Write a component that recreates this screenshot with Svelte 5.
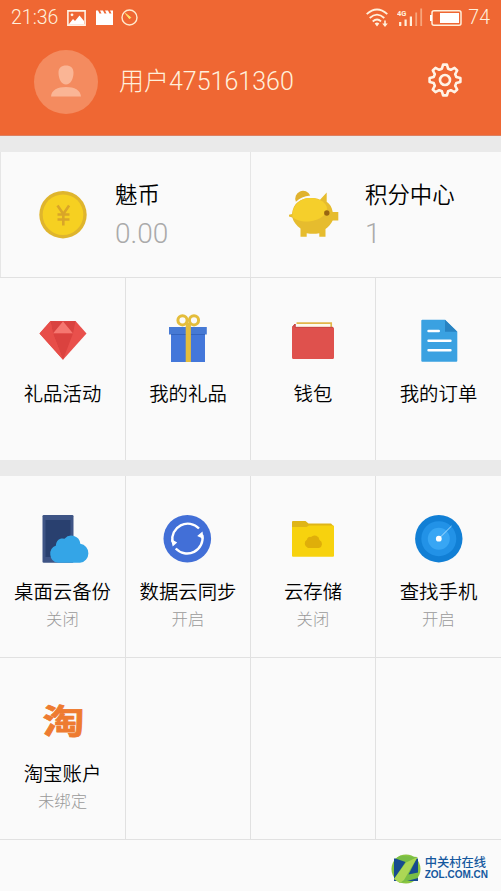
<script>
  const balances = [
    { icon: "coin", title: "魅币", value: "0.00" },
    { icon: "piggy", title: "积分中心", value: "1" },
  ];

  const gifts = [
    { icon: "gem", label: "礼品活动" },
    { icon: "gift", label: "我的礼品" },
    { icon: "wallet", label: "钱包" },
    { icon: "order", label: "我的订单" },
  ];

  const services = [
    { icon: "backup", label: "桌面云备份", state: "关闭" },
    { icon: "sync", label: "数据云同步", state: "开启" },
    { icon: "folder", label: "云存储", state: "关闭" },
    { icon: "radar", label: "查找手机", state: "开启" },
    { icon: "taobao", label: "淘宝账户", state: "未绑定" },
    {},
    {},
    {},
  ];
</script>

{#snippet icon(name)}
  <svg class="icon" viewBox="0 0 50 50">
    {#if name === "coin"}
      <circle cx="25" cy="24.7" r="23.7" fill="#dfb52d" />
      <circle cx="25" cy="24.7" r="20.3" fill="#f6d021" />
      <path d="M19.500 15.500l5.800 8.500 5.800-8.500M19.500 24.500h12M19.500 29.500h12M25.300 24v11.500" fill="none" stroke="#d9a528" stroke-width="2.600" />
    {:else if name === "piggy"}
      <path d="M7.900 11.700a7.700 7.700 0 0 1 14.300-6.200C16 6 12 8 7.900 11.700z" fill="#e0b22e" />
      <path d="M4 24C5 13 13 8 22 8c4 0 7 .3 10 1.700l6.700-7.200v9.300c3.500 2.500 5.200 5.700 6 10.200h5.600v8.500h-5.600c-1.700 3.500-4 6.200-7.200 8.500v7.700h-6.200v-3.500c-4 .7-8.500 .7-12.600 0v3.500h-6.200v-8.200C8.500 35.500 5.500 32 4.300 27.500L1 26.500v-1.800z" fill="#e6bc2e" />
      <path d="M4.500 27C3.500 16 12 8 22 8c10 0 17 5 17 11 0 7-11 12.500-20 12.500-7 0-12-1.800-14.500-4.500z" fill="#f5cf2b" />
      <circle cx="38.800" cy="23" r="2.700" fill="#986512" />
    {:else if name === "gem"}
      <path d="M12.500 5h25l11 12.500L25 43.800 1.500 17.500z" fill="#e9504c" />
      <path d="M12.500 5L25 5.500 15 17.500zM37.500 5L25 5.500l10 12z" fill="#d94340" />
      <path d="M25 5.500l10 12H15z" fill="#f57770" />
      <path d="M15 17.500h20L25 43.800z" fill="#db423f" />
      <path d="M1.500 17.500L12.500 5 15 17.500 25 43.800z" fill="#e74e49" />
    {:else if name === "gift"}
      <path d="M8 17h34v29H8z" fill="#4377da" />
      <path d="M6 11h37.800v7.500H6z" fill="#4679d4" />
      <path d="M8 18.500h34" stroke="#305fb8" stroke-width=".8" />
      <circle cx="19.500" cy="4.300" r="4.600" class="ribbon" />
      <circle cx="31" cy="4.300" r="4.600" class="ribbon" />
      <path d="M22.700 7h5.200v39h-5.200z" fill="#e4bd3b" />
    {:else if name === "wallet"}
      <path d="M8.500 7.200h34.700V13" fill="none" stroke="#e2b64a" stroke-width="1.700" />
      <path d="M10 8.500h31.500V12H10z" fill="#fffbea" />
      <path d="M4 11l2.500-3h1.200v3H44.500q1.500 0 1.500 1.500v29q0 1.500-1.500 1.500h-39Q4 43 4 41.500z" fill="#df514d" />
      <path d="M4.500 11L7 8v3.300h38" fill="none" stroke="#bd4442" stroke-width=".8" />
    {:else if name === "order"}
      <path d="M8.300 3.700H31l12.300 12v29q0 1-1 1h-34q-1 0-1-1v-40q0-1 1-1z" fill="#3aa1e1" />
      <path d="M31 3.700l12.300 12H31z" fill="#2883c2" />
      <path d="M14.500 15h10.300M14.500 24.700h22M14.500 34.300h22" stroke="#fff" stroke-width="2.400" stroke-linecap="round" />
    {:else if name === "backup"}
      <rect x="4.500" y="1" width="31" height="47.800" rx="1.200" fill="#3e5485" />
      <path d="M7.500 6h25v37h-25z" fill="#29406f" />
      <path d="M20 48.800a9 9 0 0 1-2-17.300 6.500 6.500 0 0 1 8.500-6.700 9 9 0 0 1 15.800 5A9.600 9.600 0 0 1 42 48.800z" fill="#34a5e7" />
    {:else if name === "sync"}
      <circle cx="24.300" cy="24.700" r="23.800" fill="#426fd7" />
      <path d="M36 14.500A15.500 15.500 0 0 0 9.500 28M12.700 34.500A15.500 15.500 0 0 0 39.300 21" fill="none" stroke="#fff" stroke-width="2.400" />
      <path d="M8 25l1.700 7.500 4.500-4zM40.600 25L39.500 17.500l-5.300 4.500z" fill="#fff" />
    {:else if name === "folder"}
      <path d="M4 8q0-1 1-1h12.500l3 2.500h22.500l3 3V20H4z" fill="#dfb517" />
      <path d="M4 13h14.500l2.500-1.600H45q1 0 1 1v29.300q0 1-1 1H5q-1 0-1-1z" fill="#f7d20e" />
      <path d="M20 34a4.700 4.700 0 0 1-1-8.500 3 3 0 0 1 4-2.500 5 5 0 0 1 8.500 3A4.300 4.300 0 0 1 31 34z" fill="#dfae0a" />
    {:else if name === "radar"}
      <circle cx="24.800" cy="24.700" r="23.700" fill="#117fd5" />
      <circle cx="24.800" cy="24.700" r="17.500" fill="#2292e7" />
      <circle cx="24.800" cy="24.700" r="11" fill="#38a6f4" />
      <path d="M24.800 24.700L37.500 12" stroke="#a7dcff" />
      <circle cx="24.800" cy="24.700" r="2.900" fill="#fff" />
    {:else if name === "taobao"}
      <text class="tao" transform="translate(25.500 38) scale(1 .82)">淘</text>
    {/if}
  </svg>
{/snippet}

{#snippet cell(item)}
  <div class="cell">
    {#if item.icon}
      {@render icon(item.icon)}
      <div class="label">{item.label}</div>
      {#if item.state}
        <div class="state">{item.state}</div>
      {/if}
    {/if}
  </div>
{/snippet}

<main>
  <header>
    <div class="status">
      <span class="time">21:36</span>
      <svg class="picture" width="19" height="16" viewBox="0 0 19 16">
        <path d="M.9.900h17.200v14.200H.9z" fill="none" stroke="#fff3e6" stroke-width="1.600" />
        <circle cx="5" cy="4.800" r="1.400" fill="#fff3e6" />
        <path d="M2 14l4-5 2 2 4.500-5.500L17 11v3.500H2z" fill="#fff" />
      </svg>
      <svg class="clip" width="17" height="16" viewBox="0 0 17 16">
        <path d="M0 .5h2l1.500 3h2L4 .5h3l1.500 3h2L9 .5h3l1.500 3h2L14 .5h3V15H0z" fill="#fff" />
      </svg>
      <svg class="gauge" width="17" height="17" viewBox="0 0 17 17">
        <circle cx="8.500" cy="8.500" r="7.500" fill="none" stroke="#ffe9cd" stroke-width="1.400" />
        <path d="M4.500 4.500l5.300 4-1.300 1.300z" fill="#ffe36b" stroke="#ffe36b" />
      </svg>
      <svg class="wifi" width="22" height="20" viewBox="0 0 22 20">
        <path d="M.7 6.200Q11-3.200 21.300 6.200M3.700 10Q11 3.300 18.300 10M6.700 13.500Q11 9.600 15 13.300" fill="none" stroke="#fff0dc" stroke-width="1.800" />
        <path d="M8.700 15.500q2.300-1.800 4.600 0L11 18.500zM18.200 12.500h1.600v3h2l-2.800 3.500-2.800-3.500h2z" fill="#fff0dc" />
      </svg>
      <svg class="signal" width="26" height="19" viewBox="0 0 26 19">
        <text x="0" y="7.500" class="network">4G</text>
        <path d="M3.200 18v-4M8.600 18v-6.500M13.900 18v-9.500" stroke="#fff0dc" stroke-width="2.200" />
        <path d="M19.200 18V4.500M24.200 18V.5" stroke="#f7a57b" stroke-width="1.800" />
      </svg>
      <svg class="battery" width="32" height="16" viewBox="0 0 32 16">
        <rect x="2" y=".8" width="29" height="14.400" rx="2" fill="none" stroke="#fff0dc" stroke-width="1.500" />
        <path d="M0 5h2v6H0zM10 3h19v10H10z" fill="#fff" />
      </svg>
      <span>74</span>
    </div>
    <div class="profile">
      <svg class="avatar" width="64" height="64" viewBox="0 0 64 64">
        <circle cx="32" cy="32" r="32" fill="#f48b5f" />
        <path d="M24.500 22.500c0-4.500 3-7 7.500-7s7.500 2.500 7.500 7c0 6.500-3 12-7.500 12s-7.500-5.500-7.500-12zM17 46.500c.5-6.500 6.500-9.500 15-9.500s14.500 3 15 9.500z" fill="#fab595" />
      </svg>
      <span class="name">用户475161360</span>
      <svg class="gear" width="34" height="34" viewBox="-17 -17 34 34">
        <path d="M-3.100-11.300L-1.900-15.400H1.900L3.100-11.300 5.800-10.200 9.500-12.200 12.200-9.500 10.200-5.800 11.300-3.100 15.400-1.900V1.900L11.300 3.100 10.200 5.800 12.200 9.500 9.500 12.200 5.800 10.200 3.100 11.300 1.900 15.400H-1.900L-3.100 11.300-5.800 10.200-9.500 12.200-12.200 9.500-10.200 5.800-11.300 3.100-15.400 1.900V-1.900L-11.300-3.100-10.200-5.800-12.200-9.500-9.500-12.200-5.800-10.200z" />
        <circle r="5" />
      </svg>
    </div>
  </header>

  <section class="balances">
    {#each balances as item}
      <div class="balance">
        {@render icon(item.icon)}
        <div>
          <div class="title">{item.title}</div>
          <div class="value">{item.value}</div>
        </div>
      </div>
    {/each}
  </section>

  <section class="grid gifts">
    {#each gifts as item}
      {@render cell(item)}
    {/each}
  </section>

  <section class="grid services">
    {#each services as item}
      {@render cell(item)}
    {/each}
  </section>

  <footer>
    <svg width="30" height="30" viewBox="0 0 30 30">
      <circle cx="15" cy="15" r="14.500" fill="#8bc63f" />
      <path d="M3 4.500h24v22.500H3z" fill="#174b8f" />
      <path d="M4.500 4.500L9 1.800 26.500 3 17.500 20.500 27 18.500V24L9 29 3 25l11.500-17z" fill="#79bd45" />
      <path d="M15 8.500L26.500 3 13 26 9 29 3 25z" fill="#acd755" />
    </svg>
    <div class="zol">
      <div class="zol-name">中关村在线</div>
      <div class="zol-url">ZOL.COM.CN</div>
    </div>
  </footer>
</main>

<style>
  :global(body) {
    background: #fafafa;
  }

  main {
    width: 501px;
    height: 891px;
    overflow: hidden;
    background: #fafafa;
    font-family: Roboto, "Noto Sans CJK SC", sans-serif;
    font-weight: 300;
    color: #000;
  }

  svg {
    display: block;
    flex: none;
  }

  header {
    box-sizing: border-box;
    height: 136px;
    background: #ef6733;
    border-bottom: 1px solid #dc8061;
    color: #fff0dc;
  }

  .status {
    display: flex;
    align-items: center;
    height: 35px;
    padding: 0 11px;
    font-size: 19.5px;
  }

  .time {
    width: 47px;
  }

  .picture {
    margin-left: 9px;
  }

  .clip {
    margin-left: 10px;
  }

  .gauge {
    margin-left: 8px;
  }

  .wifi {
    margin-left: auto;
  }

  .signal {
    margin-left: 9px;
  }

  .network {
    font: 700 7.5px Roboto, sans-serif;
    fill: #fff0dc;
  }

  .battery {
    margin: 0 6px 0 7px;
  }

  .profile {
    display: flex;
    align-items: center;
    height: 64px;
    padding: 15px 39px 0 34px;
  }

  .name {
    margin-left: 21px;
    font-size: 25px;
    line-height: 32px;
  }

  .gear {
    margin: 0 0 5px auto;
    fill: none;
    stroke: #fff3e6;
    stroke-width: 2.6;
    stroke-linejoin: round;
  }

  .balances {
    display: grid;
    grid-template-columns: 251px 250px;
    height: 125px;
    border-top: 16px solid #eaeaea;
    border-bottom: 1px solid #e1e1e1;
  }

  .balance {
    display: flex;
    padding: 25px 0 0 37px;
  }

  .balance:first-child {
    border-left: 1px solid #e6e6e6;
    border-right: 1px solid #e6e6e6;
  }

  .balance .icon {
    margin: 13px 27px 0 0;
  }

  .title {
    font-size: 22.4px;
    line-height: 36px;
    font-weight: 350;
  }

  .value {
    margin-top: 3px;
    font-size: 28px;
    line-height: 36px;
    color: #aaa;
  }

  .icon {
    width: 50px;
    height: 50px;
    overflow: visible;
  }

  .ribbon {
    fill: none;
    stroke: #e4bd3b;
    stroke-width: 3;
  }

  .tao {
    font: 700 42px "Noto Sans CJK SC", sans-serif;
    text-anchor: middle;
    fill: #ee7b30;
    stroke: #ee7b30;
    stroke-width: 0.9;
    stroke-linejoin: round;
  }

  .grid {
    display: grid;
    grid-template-columns: 126px 125px 125px 125px;
  }

  .gifts {
    height: 182px;
    border-bottom: 16px solid #eaeaea;
  }

  .cell {
    display: flex;
    flex-direction: column;
    align-items: center;
    box-sizing: border-box;
    padding-top: 38px;
    border-right: 1px solid #e1e1e1;
  }

  .cell:nth-child(4n) {
    border-right: 0;
  }

  .services {
    grid-auto-rows: 182px;
  }

  .services .cell {
    border-bottom: 1px solid #e1e1e1;
  }

  .label {
    margin-top: 15px;
    font-size: 19.4px;
    line-height: 28px;
    font-weight: 350;
    white-space: nowrap;
  }

  .state {
    margin-top: 1px;
    font-size: 16.4px;
    line-height: 24px;
    color: #999;
  }

  footer {
    display: flex;
    justify-content: flex-end;
    align-items: center;
    height: 51px;
    padding: 3px 13px 0 0;
  }

  .zol {
    margin-left: 4px;
    color: #15589e;
  }

  .zol-name {
    font: 500 12.3px/13px "Noto Sans CJK SC", sans-serif;
  }

  .zol-url {
    font: 700 10px/12px "Liberation Sans", sans-serif;
  }
</style>
